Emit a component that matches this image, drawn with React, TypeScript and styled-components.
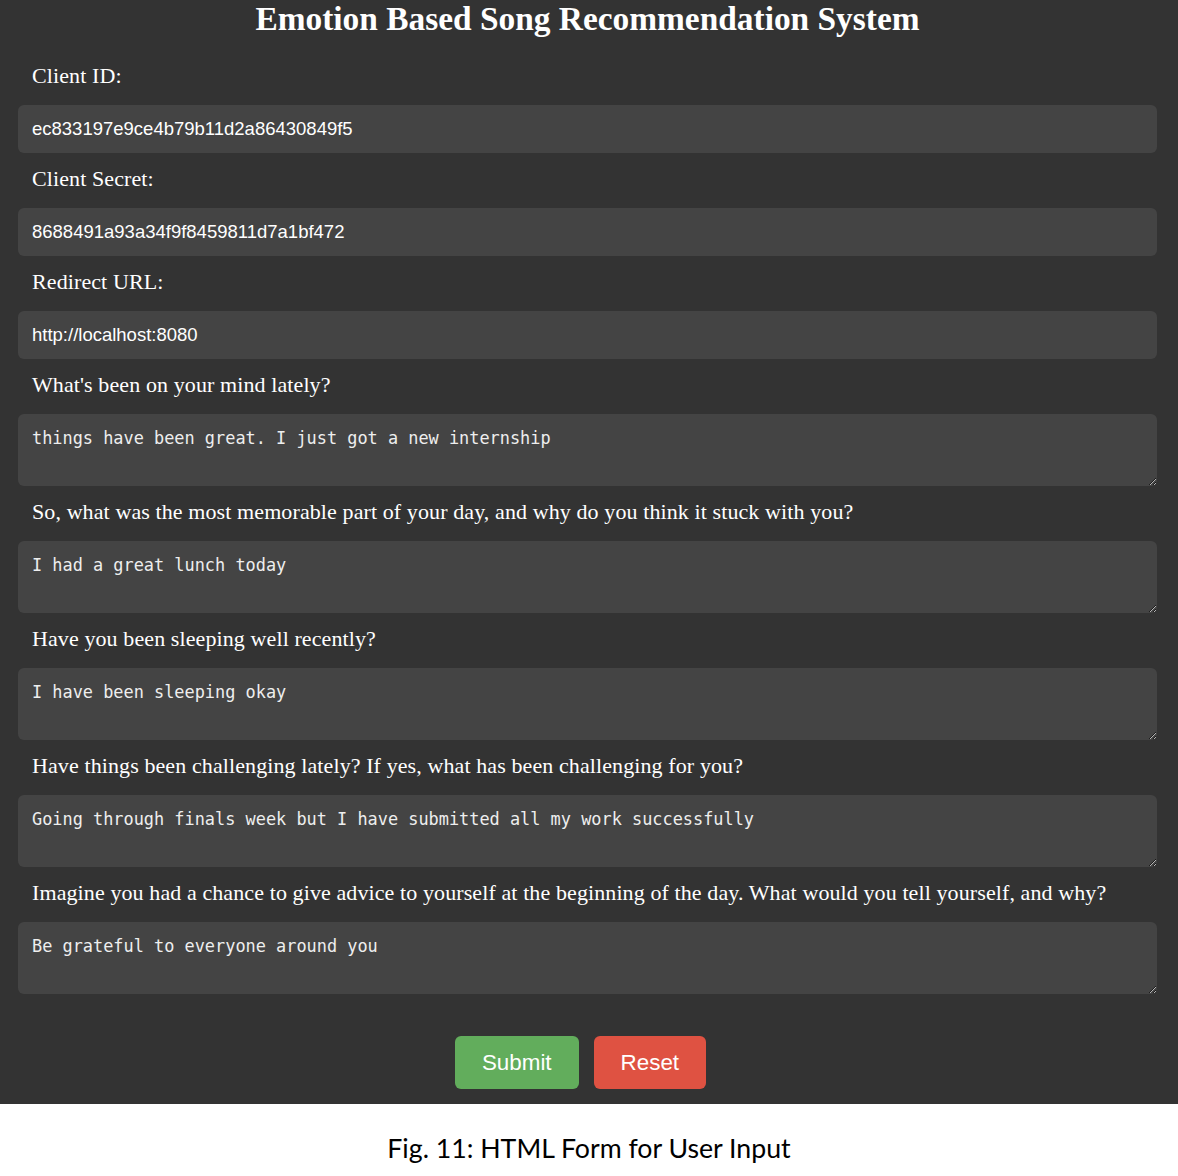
import React from "react";
import styled, { createGlobalStyle } from "styled-components";

const GlobalStyle = createGlobalStyle`
  html, body { margin: 0; padding: 0; background: #ffffff; }
  * { box-sizing: border-box; }
`;

const Panel = styled.div`
  background: #333333;
  padding: 0 21px 15px 18px;
`;

const Title = styled.h1`
  margin: 0 0 12px;
  text-align: center;
  font-family: "Liberation Serif", "Times New Roman", serif;
  font-weight: bold;
  font-size: 33.4px;
  line-height: 38px;
  color: #ffffff;
`;

const Form = styled.form`
  display: flex;
  flex-direction: column;
`;

const Label = styled.label`
  display: block;
  padding: 14px 14px 17px;
  font-family: "Liberation Serif", "Times New Roman", serif;
  font-size: 22px;
  line-height: 24px;
  letter-spacing: 0.1px;
  color: #ffffff;
`;

const TextInput = styled.input`
  display: block;
  width: 100%;
  height: 48px;
  padding: 0 14px;
  border: none;
  border-radius: 6px;
  background: #444444;
  color: #ffffff;
  font-family: "Liberation Sans", Arial, sans-serif;
  font-size: 18.5px;
  outline: none;
`;

const TextArea = styled.textarea`
  display: block;
  width: 100%;
  height: 72px;
  padding: 14px;
  margin: 0;
  border: none;
  border-radius: 6px;
  background: #444444;
  color: #eeeeee;
  font-family: "DejaVu Sans Mono", "Liberation Mono", monospace;
  font-size: 16.9px;
  line-height: 20px;
  outline: none;
  resize: vertical;
`;

const ButtonRow = styled.div`
  display: flex;
  justify-content: center;
  gap: 15px;
  margin-top: 42px;
  padding-right: 14px;
`;

const Button = styled.button<{ $variant: "submit" | "reset" }>`
  height: 53px;
  padding: 0 27px;
  border: none;
  border-radius: 6px;
  background: ${(p) => (p.$variant === "submit" ? "#62ad5c" : "#df5242")};
  color: #ffffff;
  font-family: "Liberation Sans", Arial, sans-serif;
  font-size: 22.4px;
  cursor: pointer;
`;

const Caption = styled.div`
  height: 72px;
  display: flex;
  align-items: center;
  justify-content: center;
  padding-top: 16px;
  font-family: Lato, "Noto Sans", sans-serif;
  font-size: 26.7px;
  color: #000000;
  background: #ffffff;
`;

const inputs = [
  { label: "Client ID:", value: "ec833197e9ce4b79b11d2a86430849f5" },
  { label: "Client Secret:", value: "8688491a93a34f9f8459811d7a1bf472" },
  { label: "Redirect URL:", value: "http://localhost:8080" },
];

const questions = [
  {
    label: "What's been on your mind lately?",
    value: "things have been great. I just got a new internship",
  },
  {
    label:
      "So, what was the most memorable part of your day, and why do you think it stuck with you?",
    value: "I had a great lunch today",
  },
  { label: "Have you been sleeping well recently?", value: "I have been sleeping okay" },
  {
    label:
      "Have things been challenging lately? If yes, what has been challenging for you?",
    value: "Going through finals week but I have submitted all my work successfully",
  },
  {
    label:
      "Imagine you had a chance to give advice to yourself at the beginning of the day. What would you tell yourself, and why?",
    value: "Be grateful to everyone around you",
  },
];

export default function App() {
  return (
    <>
      <GlobalStyle />
      <Panel>
        <Title>Emotion Based Song Recommendation System</Title>
        <Form onSubmit={(e) => e.preventDefault()}>
          {inputs.map((f, i) => (
            <React.Fragment key={f.label}>
              <Label htmlFor={`in-${i}`}>{f.label}</Label>
              <TextInput id={`in-${i}`} type="text" defaultValue={f.value} />
            </React.Fragment>
          ))}
          {questions.map((q, i) => (
            <React.Fragment key={q.label}>
              <Label htmlFor={`q-${i}`}>{q.label}</Label>
              <TextArea id={`q-${i}`} defaultValue={q.value} />
            </React.Fragment>
          ))}
          <ButtonRow>
            <Button type="submit" $variant="submit">Submit</Button>
            <Button type="reset" $variant="reset">Reset</Button>
          </ButtonRow>
        </Form>
      </Panel>
      <Caption>Fig. 11: HTML Form for User Input</Caption>
    </>
  );
}
